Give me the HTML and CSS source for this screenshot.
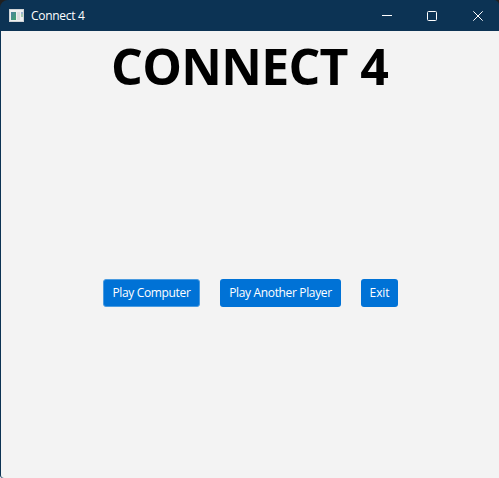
FILE: index.html
```html
<!DOCTYPE html>
<html lang="en">
<head>
<meta charset="utf-8">
<title>Connect 4</title>
<link rel="stylesheet" href="styles.css">
</head>
<body>
<div class="window">
  <header class="titlebar">
    <svg class="app-icon" width="15" height="13" viewBox="0 0 15 13">
      <defs><linearGradient id="pane" x1="0" y1="0" x2="1" y2="1"><stop offset="0" stop-color="#4b82a0"/><stop offset="1" stop-color="#3fa36c"/></linearGradient></defs>
      <rect width="15" height="13" fill="#d0d4d6"/>
      <rect x="1" y="1" width="13" height="11" fill="#eef0f0"/>
      <rect x="2" y="3" width="5" height="8" fill="url(#pane)"/>
      <rect x="8" y="3" width="3" height="8" fill="#dcdfe0"/>
      <rect x="12" y="3" width="2" height="2" fill="#9db4d2"/>
      <rect x="12" y="5" width="2" height="3" fill="#a5cbb2"/>
    </svg>
    <span class="caption">Connect 4</span>
    <nav class="controls">
      <svg width="10" height="10" viewBox="0 0 10 10"><path d="M0 4.5H10"/></svg>
      <svg class="maximize" width="10" height="10" viewBox="0 0 10 10"><rect x=".5" y=".5" width="9" height="9" rx="1"/></svg>
      <svg width="10" height="10" viewBox="0 0 10 10"><path d="M.3.3 9.7 9.7M9.7.3.3 9.7"/></svg>
    </nav>
  </header>
  <main class="content">
    <h1 class="title">CONNECT 4</h1>
    <div class="actions">
      <button class="button button-computer">Play Computer</button>
      <button class="button button-player">Play Another Player</button>
      <button class="button button-exit">Exit</button>
    </div>
  </main>
</div>
</body>
</html>
```
FILE: styles.css
```css
* { box-sizing: border-box; }
body {
  margin: 0;
  background: linear-gradient(#202020 50%, #f3f3f3 50%);
  font-family: "Open Sans", "Noto Sans", sans-serif;
}
.window {
  height: 478px;
  display: flex;
  flex-direction: column;
  overflow: hidden;
  background: #0c3354;
  border-radius: 8px 5px 0 3px;
}
.titlebar {
  height: 31px;
  flex: none;
  display: flex;
  align-items: center;
  padding: 0 16px 0 9px;
  color: #fff;
}
.app-icon { flex: none; margin-right: 7px; }
.caption {
  font-size: 12px;
  line-height: 16px;
  letter-spacing: -0.3px;
  padding-top: 1px;
}
.controls {
  margin-left: auto;
  display: flex;
  gap: 35px;
}
.controls svg {
  fill: none;
  stroke: #fff;
  stroke-width: 1;
}
.controls .maximize { margin-right: 1px; }
.content {
  flex: 1;
  margin-left: 1px;
  padding-top: 1px;
  background: #f3f3f3;
  border-bottom-left-radius: 3px;
}
.title {
  margin: 0;
  height: 68px;
  line-height: 68px;
  padding-left: 110px;
  white-space: nowrap;
  font-size: 50px;
  font-weight: 700;
  letter-spacing: -0.7px;
  color: #000;
}
.actions {
  display: flex;
  gap: 20px;
  margin: 179px 0 0 102px;
}
.button {
  height: 28px;
  padding: 0;
  border: 0;
  border-radius: 3px;
  background: #0072d6;
  color: #fff;
  font: 12px/28px "Open Sans", "Noto Sans", sans-serif;
  letter-spacing: -0.35px;
  white-space: nowrap;
}
.button-computer {
  width: 97px;
  border: 1px solid #4a9be0;
  line-height: 26px;
}
.button-player { width: 121px; }
.button-exit { width: 37px; letter-spacing: -0.1px; }
```
